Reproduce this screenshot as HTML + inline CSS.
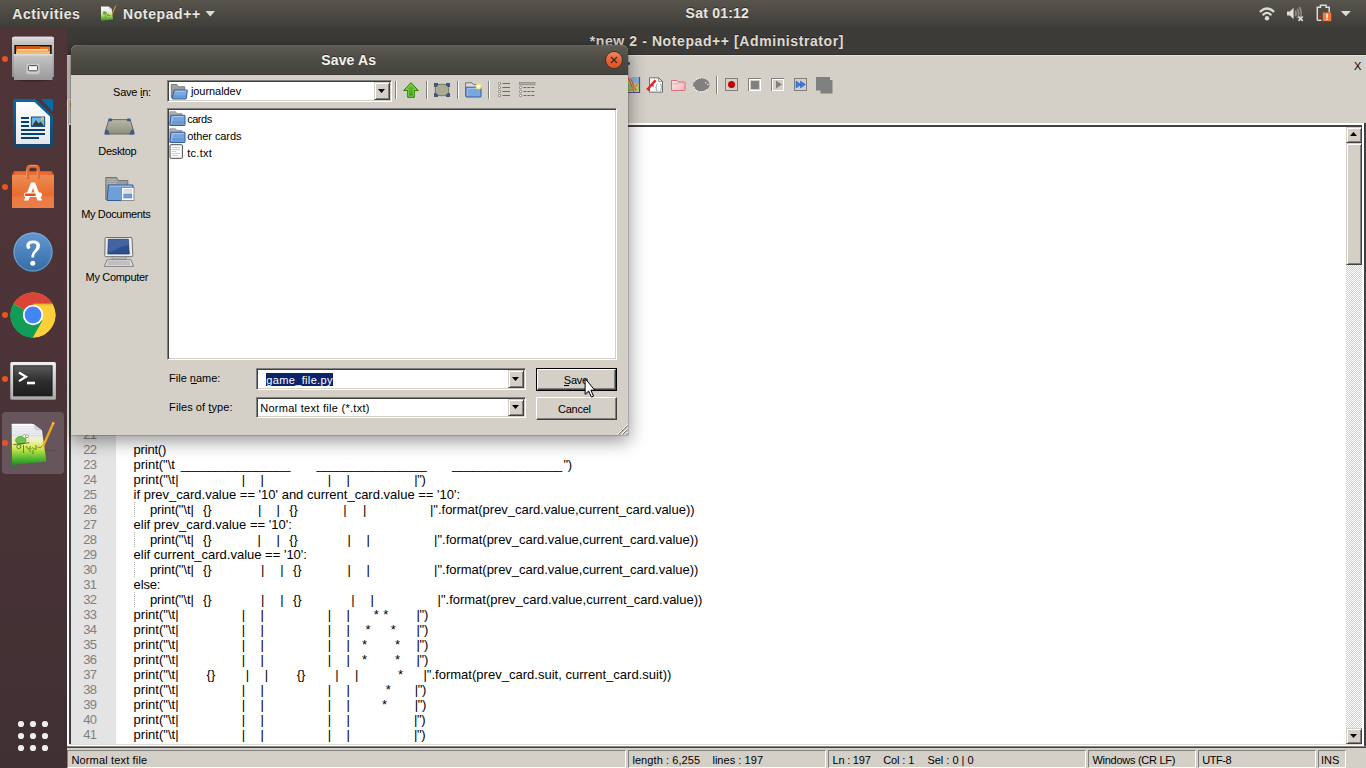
<!DOCTYPE html>
<html>
<head>
<meta charset="utf-8">
<title>Save As</title>
<style>
*{box-sizing:border-box;margin:0;padding:0}
html,body{width:1366px;height:768px;overflow:hidden;background:#d4d0c8;font-family:"Liberation Sans",sans-serif;}
div,span,svg{position:absolute}
.t{white-space:pre;line-height:normal}
#topbar{left:0;top:0;width:1366px;height:27px;background:linear-gradient(#58554d,#403e39);}
#dock{left:0;top:27px;width:67px;height:741px;background:linear-gradient(#4f3538,#4a3337 55%,#403033);}
#npptitle{left:67px;top:27px;width:1299px;height:28px;background:#3c3b37;border-bottom:1px solid #33322f}
.dot{width:6px;height:6px;border-radius:3px;background:#e95420;left:2px}
.sunk{border:1px solid;border-color:#808080 #fff #fff #808080}
.sunk2{border:1px solid;border-color:#808080 #fff #fff #808080;box-shadow:inset 1px 1px 0 #404040,inset -1px -1px 0 #d4d0c8}
.btn{background:#d4d0c8;border:1px solid;border-color:#d4d0c8 #404040 #404040 #d4d0c8;box-shadow:inset 1px 1px 0 #fff,inset -1px -1px 0 #808080}
.pbtn{background:#d4d0c8;border:1px solid;border-color:#fff #404040 #404040 #fff;box-shadow:inset -1px -1px 0 #808080}
</style>
</head>
<body>
<!-- Notepad++ main window -->
<div id="npptitle"></div>
<!-- menu remnant -->
<div style="left:628px;top:62px;width:1.5px;height:3px;background:#2a4694;border-radius:1px"></div>
<!-- toolbar icons -->
<svg style="left:624px;top:76px" width="212" height="20" viewBox="624 76 212 20">
 <!-- map icon -->
 <rect x="624" y="77" width="15" height="15" fill="#d6d870"/>
 <rect x="632" y="77" width="7" height="6.500" fill="#86b8e6"/>
 <rect x="628" y="84" width="5" height="7" fill="#8fd07a"/>
 <rect x="634" y="85" width="4" height="5" fill="#a5d68a"/>
 <path d="M628.500 78 L634 92 M630.500 78 L636 91" stroke="#e8505a" stroke-width="1.100" fill="none"/>
 <path d="M638 84 L629.500 91" stroke="#f08a2a" stroke-width="1.300" fill="none"/>
 <path d="M639.500 77 V92.500 H624" stroke="#4a4f8c" stroke-width="1.200" fill="none"/>
 <!-- function list -->
 <path d="M649.500 77.800 h9.200 l3.800 3.600 v10.800 h-13z" fill="#fdfdfb" stroke="#6e6e6e" stroke-width="1"/>
 <path d="M658.700 77.800 v3.600 h3.800" fill="none" stroke="#6e6e6e" stroke-width=".8"/>
 <path d="M647.300 89.800 L655.200 80.600" stroke="#e0242c" stroke-width="2.400" fill="none"/>
 <path d="M646.800 88.200 l2.600 2.600 M651 84.400 l2.800 2 M654.200 80 l1.800 1.600" stroke="#e0242c" stroke-width="1.300" fill="none"/>
 <path d="M657.600 84.300 q-1.200 0 -1.200 1.200 v1.200 q0 .9 -.9 .9 q.9 0 .9 .9 v1.200 q0 1.200 1.200 1.200 M660 84.300 q1.200 0 1.200 1.200 v1.200 q0 .9 .9 .9 q-.9 0 -.9 .9 v1.200 q0 1.200 -1.200 1.200" stroke="#7f9a9e" stroke-width=".9" fill="none"/>
 <!-- folder pink -->
 <defs><linearGradient id="pk" x1="0" y1="0" x2="1" y2="1"><stop offset="0" stop-color="#fdeeee"/><stop offset="1" stop-color="#f0b2b6"/></linearGradient></defs>
 <path d="M671.500 80.500 h5.500 l1 1.500 h6.500 q.5 0 .5 .5 v7.500 q0 .5 -.5 .5 h-12.500 q-.5 0 -.5 -.5z" fill="url(#pk)" stroke="#dd7078" stroke-width="1"/>
 <path d="M672 83.800 h6 l1 -1 h5.500" stroke="#e89aa0" stroke-width=".8" fill="none"/>
 <!-- monitor blob -->
 <ellipse cx="701.300" cy="84.800" rx="8.300" ry="6.600" fill="#808080"/>
 <path d="M694.500 81.500 q2 -3.200 6 -3.600 M693.800 87 q1.200 3.500 4.500 4.600 M700 91.800 q4 .3 7.500 -2.500" stroke="#ffffff" stroke-width="1.200" fill="none" stroke-dasharray="1.200 1"/>
 <circle cx="705.800" cy="82.800" r=".7" fill="#f4f2ee"/><circle cx="707.800" cy="84.500" r=".7" fill="#f4f2ee"/>
 <!-- separator -->
 <rect x="716" y="76" width="1" height="18" fill="#808080"/><rect x="717" y="76" width="1" height="18" fill="#fff"/>
 <!-- record -->
 <rect x="725.500" y="78.500" width="12" height="12" fill="#d4d0c8" stroke="#808080"/><circle cx="731.500" cy="84.500" r="3.500" fill="#cc0000"/>
 <!-- stop -->
 <rect x="748.500" y="78.500" width="12" height="12" fill="#d4d0c8" stroke="#808080"/><rect x="749.5" y="79.5" width="11" height="11" fill="none" stroke="#fff"/><rect x="751" y="81" width="8" height="8" fill="#808080"/>
 <!-- play -->
 <rect x="771.500" y="78.500" width="12" height="12" fill="#d4d0c8" stroke="#808080"/><rect x="772.5" y="79.5" width="11" height="11" fill="none" stroke="#fff"/><path d="M776 80.500 l6 4 l-6 4z" fill="#808080"/>
 <!-- ff -->
 <rect x="794.500" y="78.500" width="12" height="12" fill="#d4d0c8" stroke="#808080"/><path d="M796 81 l5 3.500 l-5 3.500z M800.500 81 l5 3.500 l-5 3.500z" fill="#3a7bea" stroke="#1e55c0" stroke-width=".5"/>
 <!-- save macro -->
 <path d="M816 77 h14 v3 h2.500 v13.500 h-12 v-3 h-4.500z" fill="#808080"/>
</svg>
<div style="left:67px;top:55px;width:1299px;height:1px;background:#e4e1da"></div>

<!-- editor frame -->
<div style="left:67px;top:100px;width:1px;height:648px;background:#fff"></div><div style="left:68px;top:125px;width:1px;height:623px;background:#fff"></div><div style="left:68px;top:99px;width:3px;height:1px;background:#f4f2ee"></div><div style="left:70px;top:103px;width:1px;height:4px;background:#e8a33d"></div>
<div style="left:69px;top:123px;width:1297px;height:2px;background:#fff"></div>
<div style="left:69px;top:125px;width:1297px;height:623px;background:#404040"></div>
<div style="left:71px;top:127px;width:1293px;height:620px;background:#fff"></div>
<div style="left:69px;top:744px;width:1293px;height:1px;background:#e0dcd4"></div><div style="left:67px;top:745px;width:1297px;height:1px;background:#fff"></div><div style="left:67px;top:746px;width:1299px;height:1px;background:#8a8a8a"></div><div style="left:67px;top:747px;width:1299px;height:1px;background:#404040"></div>
<div style="left:1362px;top:125px;width:2px;height:2px;background:#fff"></div><div style="left:1364px;top:123px;width:2px;height:2px;background:#404040"></div>
<div id="ed" style="left:71px;top:127px;width:1275px;height:617px;background:#fff;overflow:hidden">
 <div style="left:0;top:0;width:45px;height:617px;background:#e4e4e4"></div>
</div>
<!-- vertical scrollbar -->
<div style="left:1346px;top:127px;width:16px;height:617px;background:#e9e7e3;background-image:conic-gradient(#fff 25%,#d4d0c8 0 50%,#fff 0 75%,#d4d0c8 0);background-size:2px 2px"></div>
<div class="btn" style="left:1346px;top:127px;width:16px;height:16px"></div>
<div class="btn" style="left:1346px;top:143px;width:16px;height:122px"></div>
<div class="btn" style="left:1346px;top:728px;width:16px;height:16px"></div>
<svg style="left:1346px;top:127px" width="16" height="16"><path d="M4 9 h7 l-3.500 -4z" fill="#000"/></svg>
<svg style="left:1346px;top:728px" width="16" height="16"><path d="M4 6 h7 l-3.500 4z" fill="#000"/></svg>

<!-- status bar -->
<div style="left:67px;top:748px;width:1299px;height:20px;background:#d4d0c8"></div>
<div class="sunk" style="left:67px;top:750px;width:559px;height:18px"></div>
<div class="sunk" style="left:628px;top:750px;width:198px;height:18px"></div>
<div class="sunk" style="left:828px;top:750px;width:258px;height:18px"></div>
<div class="sunk" style="left:1088px;top:750px;width:108px;height:18px"></div>
<div class="sunk" style="left:1198px;top:750px;width:118px;height:18px"></div>
<div class="sunk" style="left:1318px;top:750px;width:28px;height:18px"></div>

<!-- code text -->
<div style="left:134px;top:502px;width:1px;height:15px;background-image:linear-gradient(#b0b0b0 50%,transparent 0);background-size:1px 2px"></div><div style="left:134px;top:532px;width:1px;height:15px;background-image:linear-gradient(#b0b0b0 50%,transparent 0);background-size:1px 2px"></div><div style="left:134px;top:562px;width:1px;height:15px;background-image:linear-gradient(#b0b0b0 50%,transparent 0);background-size:1px 2px"></div><div style="left:134px;top:592px;width:1px;height:15px;background-image:linear-gradient(#b0b0b0 50%,transparent 0);background-size:1px 2px"></div>
<span class="t" style="left:83.20px;top:427.00px;font-size:13px;color:#808080;letter-spacing:-0.630px;">21</span>
<span class="t" style="left:83.20px;top:442.00px;font-size:13px;color:#808080;letter-spacing:-0.630px;">22</span>
<span class="t" style="left:83.20px;top:457.00px;font-size:13px;color:#808080;letter-spacing:-0.630px;">23</span>
<span class="t" style="left:83.20px;top:472.00px;font-size:13px;color:#808080;letter-spacing:-0.630px;">24</span>
<span class="t" style="left:83.20px;top:487.00px;font-size:13px;color:#808080;letter-spacing:-0.630px;">25</span>
<span class="t" style="left:83.20px;top:502.00px;font-size:13px;color:#808080;letter-spacing:-0.630px;">26</span>
<span class="t" style="left:83.20px;top:517.00px;font-size:13px;color:#808080;letter-spacing:-0.630px;">27</span>
<span class="t" style="left:83.20px;top:532.00px;font-size:13px;color:#808080;letter-spacing:-0.630px;">28</span>
<span class="t" style="left:83.20px;top:547.00px;font-size:13px;color:#808080;letter-spacing:-0.630px;">29</span>
<span class="t" style="left:83.20px;top:562.00px;font-size:13px;color:#808080;letter-spacing:-0.630px;">30</span>
<span class="t" style="left:83.20px;top:577.00px;font-size:13px;color:#808080;letter-spacing:-0.630px;">31</span>
<span class="t" style="left:83.20px;top:592.00px;font-size:13px;color:#808080;letter-spacing:-0.630px;">32</span>
<span class="t" style="left:83.20px;top:607.00px;font-size:13px;color:#808080;letter-spacing:-0.630px;">33</span>
<span class="t" style="left:83.20px;top:622.00px;font-size:13px;color:#808080;letter-spacing:-0.630px;">34</span>
<span class="t" style="left:83.20px;top:637.00px;font-size:13px;color:#808080;letter-spacing:-0.630px;">35</span>
<span class="t" style="left:83.20px;top:652.00px;font-size:13px;color:#808080;letter-spacing:-0.630px;">36</span>
<span class="t" style="left:83.20px;top:667.00px;font-size:13px;color:#808080;letter-spacing:-0.630px;">37</span>
<span class="t" style="left:83.20px;top:682.00px;font-size:13px;color:#808080;letter-spacing:-0.630px;">38</span>
<span class="t" style="left:83.20px;top:697.00px;font-size:13px;color:#808080;letter-spacing:-0.630px;">39</span>
<span class="t" style="left:83.20px;top:712.00px;font-size:13px;color:#808080;letter-spacing:-0.630px;">40</span>
<span class="t" style="left:83.20px;top:727.00px;font-size:13px;color:#808080;letter-spacing:-0.630px;">41</span>
<span class="t" style="left:133.60px;top:442.00px;font-size:13px;letter-spacing:-0.203px;">print()</span>
<span class="t" style="left:133.60px;top:457.00px;font-size:13px;letter-spacing:-0.018px;">print("\t</span>
<span class="t" style="left:180.70px;top:457.00px;font-size:13px;letter-spacing:-0.397px;">________________</span>
<span class="t" style="left:316.40px;top:457.00px;font-size:13px;letter-spacing:-0.363px;">________________</span>
<span class="t" style="left:452.00px;top:457.00px;font-size:13px;letter-spacing:-0.363px;">________________</span>
<span class="t" style="left:563.60px;top:457.00px;font-size:13px;letter-spacing:-0.515px;">")</span>
<span class="t" style="left:133.60px;top:472.00px;font-size:13px;letter-spacing:0.016px;">print("\t|</span>
<span class="t" style="left:241.70px;top:472.00px;font-size:13px;">|</span>
<span class="t" style="left:260.60px;top:472.00px;font-size:13px;">|</span>
<span class="t" style="left:327.80px;top:472.00px;font-size:13px;">|</span>
<span class="t" style="left:346.50px;top:472.00px;font-size:13px;">|</span>
<span class="t" style="left:133.60px;top:607.00px;font-size:13px;letter-spacing:0.016px;">print("\t|</span>
<span class="t" style="left:241.70px;top:607.00px;font-size:13px;">|</span>
<span class="t" style="left:260.60px;top:607.00px;font-size:13px;">|</span>
<span class="t" style="left:327.80px;top:607.00px;font-size:13px;">|</span>
<span class="t" style="left:346.50px;top:607.00px;font-size:13px;">|</span>
<span class="t" style="left:133.60px;top:622.00px;font-size:13px;letter-spacing:0.016px;">print("\t|</span>
<span class="t" style="left:241.70px;top:622.00px;font-size:13px;">|</span>
<span class="t" style="left:260.60px;top:622.00px;font-size:13px;">|</span>
<span class="t" style="left:327.80px;top:622.00px;font-size:13px;">|</span>
<span class="t" style="left:346.50px;top:622.00px;font-size:13px;">|</span>
<span class="t" style="left:133.60px;top:637.00px;font-size:13px;letter-spacing:0.016px;">print("\t|</span>
<span class="t" style="left:241.70px;top:637.00px;font-size:13px;">|</span>
<span class="t" style="left:260.60px;top:637.00px;font-size:13px;">|</span>
<span class="t" style="left:327.80px;top:637.00px;font-size:13px;">|</span>
<span class="t" style="left:346.50px;top:637.00px;font-size:13px;">|</span>
<span class="t" style="left:133.60px;top:652.00px;font-size:13px;letter-spacing:0.016px;">print("\t|</span>
<span class="t" style="left:241.70px;top:652.00px;font-size:13px;">|</span>
<span class="t" style="left:260.60px;top:652.00px;font-size:13px;">|</span>
<span class="t" style="left:327.80px;top:652.00px;font-size:13px;">|</span>
<span class="t" style="left:346.50px;top:652.00px;font-size:13px;">|</span>
<span class="t" style="left:133.60px;top:682.00px;font-size:13px;letter-spacing:0.016px;">print("\t|</span>
<span class="t" style="left:241.70px;top:682.00px;font-size:13px;">|</span>
<span class="t" style="left:260.60px;top:682.00px;font-size:13px;">|</span>
<span class="t" style="left:327.80px;top:682.00px;font-size:13px;">|</span>
<span class="t" style="left:346.50px;top:682.00px;font-size:13px;">|</span>
<span class="t" style="left:133.60px;top:697.00px;font-size:13px;letter-spacing:0.016px;">print("\t|</span>
<span class="t" style="left:241.70px;top:697.00px;font-size:13px;">|</span>
<span class="t" style="left:260.60px;top:697.00px;font-size:13px;">|</span>
<span class="t" style="left:327.80px;top:697.00px;font-size:13px;">|</span>
<span class="t" style="left:346.50px;top:697.00px;font-size:13px;">|</span>
<span class="t" style="left:133.60px;top:712.00px;font-size:13px;letter-spacing:0.016px;">print("\t|</span>
<span class="t" style="left:241.70px;top:712.00px;font-size:13px;">|</span>
<span class="t" style="left:260.60px;top:712.00px;font-size:13px;">|</span>
<span class="t" style="left:327.80px;top:712.00px;font-size:13px;">|</span>
<span class="t" style="left:346.50px;top:712.00px;font-size:13px;">|</span>
<span class="t" style="left:133.60px;top:727.00px;font-size:13px;letter-spacing:0.016px;">print("\t|</span>
<span class="t" style="left:241.70px;top:727.00px;font-size:13px;">|</span>
<span class="t" style="left:260.60px;top:727.00px;font-size:13px;">|</span>
<span class="t" style="left:327.80px;top:727.00px;font-size:13px;">|</span>
<span class="t" style="left:346.50px;top:727.00px;font-size:13px;">|</span>
<span class="t" style="left:414.30px;top:472.00px;font-size:13px;letter-spacing:-0.346px;">|")</span>
<span class="t" style="left:133.60px;top:487.00px;font-size:13px;">if prev_card.value == '10' and current_card.value == '10':</span>
<span class="t" style="left:149.90px;top:502.00px;font-size:13px;letter-spacing:-0.106px;">print("\t|</span>
<span class="t" style="left:202.90px;top:502.00px;font-size:13px;">{}</span>
<span class="t" style="left:149.90px;top:532.00px;font-size:13px;letter-spacing:-0.106px;">print("\t|</span>
<span class="t" style="left:202.90px;top:532.00px;font-size:13px;">{}</span>
<span class="t" style="left:149.90px;top:562.00px;font-size:13px;letter-spacing:-0.106px;">print("\t|</span>
<span class="t" style="left:202.90px;top:562.00px;font-size:13px;">{}</span>
<span class="t" style="left:149.90px;top:592.00px;font-size:13px;letter-spacing:-0.106px;">print("\t|</span>
<span class="t" style="left:202.90px;top:592.00px;font-size:13px;">{}</span>
<span class="t" style="left:258.10px;top:502.00px;font-size:13px;">|</span>
<span class="t" style="left:276.50px;top:502.00px;font-size:13px;">|</span>
<span class="t" style="left:343.20px;top:502.00px;font-size:13px;">|</span>
<span class="t" style="left:363.10px;top:502.00px;font-size:13px;">|</span>
<span class="t" style="left:289.20px;top:502.00px;font-size:13px;">{}</span>
<span class="t" style="left:430.00px;top:502.00px;font-size:13px;letter-spacing:-0.015px;">|".format(prev_card.value,current_card.value))</span>
<span class="t" style="left:133.60px;top:517.00px;font-size:13px;">elif prev_card.value == '10':</span>
<span class="t" style="left:257.40px;top:532.00px;font-size:13px;">|</span>
<span class="t" style="left:276.50px;top:532.00px;font-size:13px;">|</span>
<span class="t" style="left:347.50px;top:532.00px;font-size:13px;">|</span>
<span class="t" style="left:366.40px;top:532.00px;font-size:13px;">|</span>
<span class="t" style="left:289.20px;top:532.00px;font-size:13px;">{}</span>
<span class="t" style="left:434.10px;top:532.00px;font-size:13px;letter-spacing:-0.022px;">|".format(prev_card.value,current_card.value))</span>
<span class="t" style="left:133.60px;top:547.00px;font-size:13px;">elif current_card.value == '10':</span>
<span class="t" style="left:261.10px;top:562.00px;font-size:13px;">|</span>
<span class="t" style="left:280.30px;top:562.00px;font-size:13px;">|</span>
<span class="t" style="left:347.50px;top:562.00px;font-size:13px;">|</span>
<span class="t" style="left:366.40px;top:562.00px;font-size:13px;">|</span>
<span class="t" style="left:293.00px;top:562.00px;font-size:13px;">{}</span>
<span class="t" style="left:434.10px;top:562.00px;font-size:13px;letter-spacing:-0.022px;">|".format(prev_card.value,current_card.value))</span>
<span class="t" style="left:133.60px;top:577.00px;font-size:13px;letter-spacing:-0.162px;">else:</span>
<span class="t" style="left:261.10px;top:592.00px;font-size:13px;">|</span>
<span class="t" style="left:280.30px;top:592.00px;font-size:13px;">|</span>
<span class="t" style="left:351.20px;top:592.00px;font-size:13px;">|</span>
<span class="t" style="left:370.60px;top:592.00px;font-size:13px;">|</span>
<span class="t" style="left:293.00px;top:592.00px;font-size:13px;">{}</span>
<span class="t" style="left:437.60px;top:592.00px;font-size:13px;letter-spacing:-0.011px;">|".format(prev_card.value,current_card.value))</span>
<span class="t" style="left:373.80px;top:607.00px;font-size:13px;">*</span>
<span class="t" style="left:383.30px;top:607.00px;font-size:13px;">*</span>
<span class="t" style="left:416.40px;top:607.00px;font-size:13px;letter-spacing:-0.246px;">|")</span>
<span class="t" style="left:365.60px;top:622.00px;font-size:13px;">*</span>
<span class="t" style="left:390.80px;top:622.00px;font-size:13px;">*</span>
<span class="t" style="left:416.40px;top:622.00px;font-size:13px;letter-spacing:-0.246px;">|")</span>
<span class="t" style="left:361.90px;top:637.00px;font-size:13px;">*</span>
<span class="t" style="left:395.00px;top:637.00px;font-size:13px;">*</span>
<span class="t" style="left:416.40px;top:637.00px;font-size:13px;letter-spacing:-0.246px;">|")</span>
<span class="t" style="left:361.90px;top:652.00px;font-size:13px;">*</span>
<span class="t" style="left:395.00px;top:652.00px;font-size:13px;">*</span>
<span class="t" style="left:416.40px;top:652.00px;font-size:13px;letter-spacing:-0.246px;">|")</span>
<span class="t" style="left:133.60px;top:667.00px;font-size:13px;letter-spacing:0.016px;">print("\t|</span>
<span class="t" style="left:206.60px;top:667.00px;font-size:13px;">{}</span>
<span class="t" style="left:245.70px;top:667.00px;font-size:13px;">|</span>
<span class="t" style="left:264.80px;top:667.00px;font-size:13px;">|</span>
<span class="t" style="left:335.30px;top:667.00px;font-size:13px;">|</span>
<span class="t" style="left:354.90px;top:667.00px;font-size:13px;">|</span>
<span class="t" style="left:296.70px;top:667.00px;font-size:13px;">{}</span>
<span class="t" style="left:398.00px;top:667.00px;font-size:13px;">*</span>
<span class="t" style="left:423.40px;top:667.00px;font-size:13px;letter-spacing:0.018px;">|".format(prev_card.suit, current_card.suit))</span>
<span class="t" style="left:385.80px;top:682.00px;font-size:13px;">*</span>
<span class="t" style="left:414.70px;top:682.00px;font-size:13px;letter-spacing:-0.346px;">|")</span>
<span class="t" style="left:382.10px;top:697.00px;font-size:13px;">*</span>
<span class="t" style="left:414.70px;top:697.00px;font-size:13px;letter-spacing:-0.346px;">|")</span>
<span class="t" style="left:413.90px;top:712.00px;font-size:13px;letter-spacing:-0.346px;">|")</span>
<span class="t" style="left:413.90px;top:727.00px;font-size:13px;letter-spacing:-0.346px;">|")</span>
<span class="t" style="left:1353.90px;top:60.00px;font-size:11px;">X</span>
<span class="t" style="left:71.40px;top:754.00px;font-size:11px;letter-spacing:0.158px;">Normal text file</span>
<span class="t" style="left:632.40px;top:754.00px;font-size:11px;letter-spacing:0.081px;">length : 6,255</span>
<span class="t" style="left:712.40px;top:754.00px;font-size:11px;letter-spacing:0.047px;">lines : 197</span>
<span class="t" style="left:832.50px;top:754.00px;font-size:11px;letter-spacing:-0.206px;">Ln : 197</span>
<span class="t" style="left:883.20px;top:754.00px;font-size:11px;letter-spacing:-0.112px;">Col : 1</span>
<span class="t" style="left:927.40px;top:754.00px;font-size:11px;letter-spacing:-0.005px;">Sel : 0 | 0</span>
<span class="t" style="left:1092.50px;top:754.00px;font-size:11px;letter-spacing:-0.280px;">Windows (CR LF)</span>
<span class="t" style="left:1202.20px;top:754.00px;font-size:11px;letter-spacing:-0.461px;">UTF-8</span>
<span class="t" style="left:1321.00px;top:754.00px;font-size:11px;">INS</span>
<span class="t" style="left:589.80px;top:33.00px;font-size:14px;font-weight:bold;color:#dfdbd2;letter-spacing:0.591px;text-shadow:0 -1px 0 rgba(0,0,0,.45);">*new 2 - Notepad++ [Administrator]</span>
<!-- Save As dialog -->
<div id="dlg" style="left:71px;top:45px;width:557px;height:390px;background:#d4d0c8;border-radius:6px 6px 0 0;box-shadow:0 5px 18px 1px rgba(0,0,0,.42),0 0 0 1px rgba(40,40,36,.18)">
 <div style="left:0;top:0;width:557px;height:30px;background:linear-gradient(#5d5b51,#4d4b44 50%,#44433e);border-radius:6px 6px 0 0;border-top:1px solid #68665b;border-bottom:1px solid #3a3935"></div>
 <!-- close button -->
 <div style="left:534px;top:6px;width:18px;height:18px;border-radius:9px;background:#37362f"></div>
 <div style="left:535px;top:7px;width:16px;height:16px;border-radius:8px;background:linear-gradient(#f08763,#e9602e 55%,#e2541f)"></div>
 <svg style="left:535px;top:7px" width="16" height="16"><path d="M5 5 L11 11 M11 5 L5 11" stroke="#3d2a1c" stroke-width="1.300" fill="none"/></svg>

 <!-- Save in combo: abs (167,80)-(391,101) => rel (96,35) -->
 <div class="sunk2" style="left:96px;top:35px;width:225px;height:22px;background:#fff"></div>
 <div class="btn" style="left:303px;top:37px;width:16px;height:18px"></div>
 <svg style="left:303px;top:37px" width="16" height="18"><path d="M4 7 h7 l-3.500 4z" fill="#000"/></svg>
 <!-- folder icon in combo -->
 <svg style="left:99px;top:39px" width="18" height="16" viewBox="0 0 18 16"><defs><linearGradient id="gb" x1="0" y1="0" x2="0" y2="1"><stop offset="0" stop-color="#a6a6a6"/><stop offset="1" stop-color="#8a8a8a"/></linearGradient></defs><path d="M1.300 .5 h5.600 l1.500 2.200 h6.300 v10.800 h-13.400z" fill="url(#gb)" stroke="#6a6a6a" stroke-width=".8"/><path d="M4.600 6 h12.200 q.6 0 .5 .6 l-1 7.800 q-.1 .6 -.7 .6 h-12.800 q-.7 0 -.5 -.7 l1.700 -7.700 q.1 -.6 .6 -.6z" fill="#7aa7de" stroke="#2f5c9c" stroke-width="1"/><path d="M5.200 7.200 h10.900" stroke="#b9d3f2" stroke-width=".9"/><path d="M3.600 11.500 l-.5 2.500 h12.500 l.3 -2.500z" fill="#5f8fd0" opacity=".6"/></svg>

 <!-- dialog toolbar separators -->
 <div style="left:324px;top:36px;width:1px;height:18px;background:#808080"></div><div style="left:325px;top:36px;width:1px;height:18px;background:#fff"></div>
 <div style="left:355px;top:36px;width:1px;height:18px;background:#808080"></div><div style="left:356px;top:36px;width:1px;height:18px;background:#fff"></div>
 <div style="left:386px;top:36px;width:1px;height:18px;background:#808080"></div><div style="left:387px;top:36px;width:1px;height:18px;background:#fff"></div>
 <div style="left:417px;top:36px;width:1px;height:18px;background:#808080"></div><div style="left:418px;top:36px;width:1px;height:18px;background:#fff"></div>
 <!-- up arrow (abs 403..419, 82..98) -->
 <svg style="left:332px;top:37px" width="16" height="16"><defs><linearGradient id="ua" x1="0" y1="0" x2="0" y2="1"><stop offset="0" stop-color="#6cc832"/><stop offset="1" stop-color="#3f9a12"/></linearGradient></defs><path d="M8 .7 L15.300 8.500 H11.300 V15.300 H4.700 V8.500 H.7z" fill="url(#ua)" stroke="#2f7d0c" stroke-width="1" stroke-linejoin="round"/><path d="M8 2.300 L12.900 7.500 H10.300 V14.300 H5.700 V7.500 H3.100z" fill="none" stroke="#9be46a" stroke-width=".8" opacity=".8"/></svg>
 <!-- desktop small (abs 434..450, 83..97) -->
 <svg style="left:363px;top:38px" width="16" height="14"><path d="M0 0 h4 v1.500 h8 v-1.500 h4 v4 h-1.500 v6 h1.500 v4 h-4 v-1.500 h-8 v1.500 h-4 v-4 h1.500 v-6 h-1.500z" fill="#3b5787"/><path d="M5 1.300 h6 l3.700 3.200 v5 l-3.700 3.200 h-6 l-3.700 -3.200 v-5z" fill="#a9ab94" stroke="#6c6e58" stroke-width=".8" stroke-linejoin="round"/></svg>
 <!-- new folder (abs 465..481, 82..97) -->
 <svg style="left:394px;top:37px" width="17" height="16"><path d="M.6 .8 h6.400 l1.500 1.800 h5 v11.600 h-12.900z" fill="#dcdcdc" stroke="#6a6a6a" stroke-width=".9"/><path d="M1.600 5.200 h13.900 q.5 0 .5 .5 v8.800 q0 .5 -.5 .5 h-13.900 q-.5 0 -.5 -.5 v-8.800 q0 -.5 .5 -.5z" fill="#7aa7de" stroke="#2f5c9c" stroke-width="1"/><path d="M2.200 14 v-7.600 h12.600" stroke="#b4cff0" stroke-width=".8" fill="none"/><circle cx="13.600" cy="4.400" r="2.900" fill="#fff27a" opacity=".85"/><circle cx="13.600" cy="4.400" r="1.500" fill="#fffef0"/></svg>
 <!-- list icon (abs 498..510, 82.5..97) -->
 <svg style="left:427px;top:37px" width="14" height="16"><g fill="#fff" stroke="#5c5c5c" stroke-width=".7"><circle cx="1.500" cy="1.500" r="1.150"/><circle cx="1.500" cy="5.500" r="1.150"/><circle cx="1.500" cy="9.500" r="1.150"/><circle cx="1.500" cy="13.500" r="1.150"/></g><path d="M4.500 1.500 h7.500 M4.500 5.500 h7.500 M4.500 9.500 h7.500 M4.500 13.500 h7.500" stroke="#6a6a6a" stroke-width="1"/></svg>
 <!-- details icon (abs 519..535) -->
 <svg style="left:448px;top:37px" width="17" height="16"><rect x=".5" y=".5" width="15.500" height="2.300" fill="#a9b0a6" stroke="#7c7c7c" stroke-width=".6"/><g fill="#fff" stroke="#5c5c5c" stroke-width=".7"><circle cx="1.500" cy="5.500" r="1.150"/><circle cx="1.500" cy="9.500" r="1.150"/><circle cx="1.500" cy="13.500" r="1.150"/></g><path d="M4.500 5.500 h11 M4.500 9.500 h11 M4.500 13.500 h11" stroke="#6a6a6a" stroke-width="1" stroke-dasharray="3 .9"/></svg>

 <!-- file list: abs (167,107)-(617,359) => rel (96,62) 450x252 -->
 <div class="sunk2" style="left:96px;top:63px;width:450px;height:252px;background:#fff"></div>
 <!-- folder icons -->
 <svg style="left:98px;top:66px" width="17" height="15" viewBox="0 0 17 15"><path d="M.8 .8 h5.700 l1.500 1.800 h4.800 v11.600 h-12z" fill="#b5b5b5" stroke="#8a8a8a" stroke-width=".8"/><path d="M2.300 4.200 h13.200 q.5 0 .5 .5 v9.300 q0 .5 -.5 .5 h-14.200 q-.5 0 -.4 -.5 l1 -9.300 q0 -.5 .5 -.5z" fill="#78a5dc" stroke="#2f5c9c" stroke-width="1"/><path d="M2.600 13 l.7 -7.400 h11.400" stroke="#b4cff0" stroke-width=".9" fill="none"/><path d="M2.800 10 h11.700 v3.300 h-11.700z" fill="#5f8fd0" opacity=".55"/></svg>
 <svg style="left:98px;top:83px" width="17" height="15" viewBox="0 0 17 15"><path d="M.8 .8 h5.700 l1.500 1.800 h4.800 v11.600 h-12z" fill="#b5b5b5" stroke="#8a8a8a" stroke-width=".8"/><path d="M2.300 4.200 h13.200 q.5 0 .5 .5 v9.300 q0 .5 -.5 .5 h-14.200 q-.5 0 -.4 -.5 l1 -9.300 q0 -.5 .5 -.5z" fill="#78a5dc" stroke="#2f5c9c" stroke-width="1"/><path d="M2.600 13 l.7 -7.400 h11.400" stroke="#b4cff0" stroke-width=".9" fill="none"/><path d="M2.800 10 h11.700 v3.300 h-11.700z" fill="#5f8fd0" opacity=".55"/></svg>
 <!-- text file icon -->
 <svg style="left:98px;top:99px" width="14" height="15"><rect x="1" y=".7" width="12.400" height="13.600" rx="1" fill="#fcfcfc" stroke="#4e4e4e" stroke-width="1"/><path d="M3 3.500 h8 M3 5.500 h8 M3 7.500 h4 M3 9.500 h8 M3 11.500 h6" stroke="#c8c8c8" stroke-width=".9"/></svg>

 <!-- places icons -->
 <!-- Desktop abs (104..134, 118.7..134.7) -->
 <svg style="left:33px;top:73px" width="31" height="17" viewBox="0 0 31 17"><defs><linearGradient id="dk" x1="0" y1="0" x2="0" y2="1"><stop offset="0" stop-color="#b6b8a5"/><stop offset="1" stop-color="#8e907d"/></linearGradient></defs><path d="M5.800 1.600 h19.400 q1 0 1.300 1 l3.500 12 q.3 1.400 -1.100 1.400 h-26.800 q-1.400 0 -1.100 -1.400 l3.500 -12 q.3 -1 1.300 -1z" fill="url(#dk)" stroke="#5f6152" stroke-width=".9"/><rect x="4.300" y=".6" width="3.800" height="2.600" rx=".9" fill="#3d5a8e"/><rect x="22.900" y=".6" width="3.800" height="2.600" rx=".9" fill="#3d5a8e"/><path d="M.3 16.500 l1.500 -5.200 q3 .3 3.800 5.200z" fill="#3d5a8e"/><path d="M30.700 16.500 l-1.500 -5.200 q-3 .3 -3.800 5.200z" fill="#3d5a8e"/></svg>
 <!-- My Documents abs (105..134, 177..201.5) -->
 <svg style="left:34px;top:131px" width="30" height="26" viewBox="0 0 30 26"><path d="M.8 1.500 h11 l1.500 3 h9.500 v19 h-22z" fill="#9b9b9b" stroke="#6e6e6e" stroke-width=".9"/><path d="M1.500 3.500 h10 M1.500 5.500 h10 M1.500 7.500 h10" stroke="#b8b8b8" stroke-width=".8"/><path d="M3.500 9 h24.500 l-1 15.500 h-25z" fill="#6f9fd8" stroke="#2f5c9c" stroke-width="1"/><path d="M4.500 10.200 h22.500" stroke="#a9c8ee" stroke-width="1"/><rect x="16.500" y="11.500" width="12.500" height="13" fill="#fafafa" stroke="#8c8c8c" stroke-width=".9"/><path d="M18.500 14 h8.500 M18.500 16 h8.500" stroke="#bcbcbc" stroke-width=".9"/><rect x="18.800" y="18" width="8" height="4" fill="#6f9fd8" stroke="#5b7fb5" stroke-width=".6"/></svg>
 <!-- My Computer abs (104..134, 237..268) -->
 <svg style="left:33px;top:191px" width="32" height="33" viewBox="0 0 32 33"><path d="M2 1.500 h25 q1 0 1 1 l.8 17 q0 1.200 -1 1.200 h-26 q-1 0 -1 -1.200 l.300 -17 q0 -1 1 -1z" fill="#ededed" stroke="#6f6f6f" stroke-width="1"/><path d="M4.300 3.300 h20 l1 14.700 h-21.500z" fill="#2b4f8f" stroke="#1d3566" stroke-width=".7"/><path d="M4.500 3.500 h19.600 l.4 5.500 q-8 1 -12 4 q-4 3 -8.300 3.500z" fill="#6c8cc4" opacity=".38"/><rect x="8" y="20.800" width="14" height="2.300" fill="#bdbdbd" stroke="#7a7a7a" stroke-width=".6"/><path d="M3 23.800 h24 l2.500 6.500 h-29z" fill="#ececec" stroke="#6f6f6f" stroke-width=".9"/><path d="M3.500 26 h22.500 M3 28 h23.500" stroke="#b0b0b0" stroke-width="1.500"/></svg>

 <!-- File name combo abs (256,368)-(525,389) rel (185,323) -->
 <div class="sunk2" style="left:185px;top:323px;width:270px;height:22px;background:#fff"></div>
 <div class="btn" style="left:437px;top:325px;width:16px;height:18px"></div>
 <svg style="left:437px;top:325px" width="16" height="18"><path d="M4 7 h7 l-3.500 4z" fill="#000"/></svg>
 <div style="left:195px;top:328px;width:67px;height:13px;background:#0a246a"></div>
 <!-- type combo abs (256,397)-(525,418) rel (185,352) -->
 <div class="sunk2" style="left:185px;top:352px;width:270px;height:21px;background:#fff"></div>
 <div class="btn" style="left:437px;top:354px;width:16px;height:17px"></div>
 <svg style="left:437px;top:354px" width="16" height="17"><path d="M4 6 h7 l-3.500 4z" fill="#000"/></svg>

 <!-- Save button abs (536,368)-(617,391) rel (465,323) -->
 <div style="left:465px;top:323px;width:81px;height:23px;background:#000"></div>
 <div class="pbtn" style="left:466px;top:324px;width:79px;height:21px"></div>
 <!-- Cancel abs (536,397)-(617,420) -->
 <div class="pbtn" style="left:465px;top:352px;width:81px;height:23px"></div>

 <!-- resize grip -->
 <svg style="left:546px;top:379px" width="11" height="11"><path d="M10.500 1.500 L1.500 10.500 M10.500 5.500 L5.500 10.500 M10.500 9 L9 10.500" stroke="#808080" stroke-width="1.200"/><path d="M10.500 .5 L.5 10.500 M10.500 4.500 L4.500 10.500 M10.500 8 L8 10.500" stroke="#fff" stroke-width="1"/></svg>
 <div style="left:70px;top:52px;width:2px;height:1px;background:#000"></div>
 <div style="left:120px;top:338px;width:6px;height:1px;background:#000"></div>
 <div style="left:138px;top:367px;width:3px;height:1px;background:#000"></div>
 <div style="left:493px;top:340px;width:5px;height:1px;background:#000"></div>
</div>

<span class="t" style="left:321.20px;top:52.00px;font-size:14px;font-weight:bold;color:#f4f3ef;letter-spacing:0.167px;text-shadow:0 -1px 0 rgba(0,0,0,.45);">Save As</span>
<span class="t" style="left:113.10px;top:86.00px;font-size:11px;letter-spacing:-0.241px;">Save in:</span>
<span class="t" style="left:190.90px;top:85.00px;font-size:11px;letter-spacing:-0.051px;">journaldev</span>
<span class="t" style="left:187.20px;top:113.00px;font-size:11px;letter-spacing:-0.475px;">cards</span>
<span class="t" style="left:187.20px;top:130.00px;font-size:11px;letter-spacing:-0.073px;">other cards</span>
<span class="t" style="left:187.20px;top:147.00px;font-size:11px;letter-spacing:0.286px;">tc.txt</span>
<span class="t" style="left:98.30px;top:145.00px;font-size:11px;letter-spacing:-0.323px;">Desktop</span>
<span class="t" style="left:81.20px;top:208.00px;font-size:11px;letter-spacing:-0.350px;">My Documents</span>
<span class="t" style="left:85.60px;top:271.00px;font-size:11px;letter-spacing:-0.325px;">My Computer</span>
<span class="t" style="left:169.10px;top:372.00px;font-size:11px;letter-spacing:-0.011px;">File name:</span>
<span class="t" style="left:266.30px;top:374.00px;font-size:11px;color:#fff;letter-spacing:0.348px;">game_file.py</span>
<span class="t" style="left:169.10px;top:401.00px;font-size:11px;letter-spacing:0.077px;">Files of type:</span>
<span class="t" style="left:260.20px;top:402.00px;font-size:11px;letter-spacing:0.286px;">Normal text file (*.txt)</span>
<span class="t" style="left:563.80px;top:374.00px;font-size:11px;letter-spacing:-0.252px;">Save</span>
<span class="t" style="left:558.00px;top:403.00px;font-size:11px;letter-spacing:-0.259px;">Cancel</span>
<!-- top bar -->
<div id="topbar"></div>
<!-- notepad++ tiny icon in topbar (100.5..115, 6..20.7) -->
<svg style="left:100px;top:5px" width="17" height="17" viewBox="0 0 17 17"><defs><linearGradient id="g1" x1="0" y1="0" x2="0" y2="1"><stop offset="0" stop-color="#fbfbfb"/><stop offset=".38" stop-color="#e4e8e4"/><stop offset=".55" stop-color="#cfe56e"/><stop offset="1" stop-color="#239623"/></linearGradient></defs><path d="M1 1.500 h7.500 l3.200 2.600 l1.300 10.400 l-12 1.300z" fill="url(#g1)"/><path d="M8.500 1.500 l3.200 2.600 l-3 -.2z" fill="#cdd1d6"/><path d="M15.800 .6 L12 9.300" stroke="#e8a020" stroke-width="1"/><ellipse cx="4.800" cy="7.600" rx="2.100" ry="1.400" fill="#5aa83f"/><circle cx="6.300" cy="6.300" r=".8" fill="#f4f8ee"/><path d="M3 9.200 h6 M5.500 10 v2.500 M7 10.500 h3.500" stroke="#4a7a22" stroke-width=".6"/></svg>
<!-- app menu arrow -->
<svg style="left:205px;top:10px" width="11" height="8"><path d="M.5 1 h9.500 l-4.750 5.500z" fill="#dcdcd6"/></svg>
<!-- wifi -->
<svg style="left:1259px;top:6px" width="16" height="16" viewBox="0 0 16 16"><g fill="none" stroke="#dddcd6" stroke-linecap="round"><path d="M1.600 5.300 Q8 -.3 14.400 5.300" stroke-width="2.300"/><path d="M4.300 8.600 Q8 5.300 11.700 8.600" stroke-width="2.200"/></g><circle cx="8" cy="12.300" r="2.200" fill="#dddcd6"/></svg>
<!-- volume muted -->
<svg style="left:1286px;top:5px" width="19" height="18" viewBox="0 0 19 18"><path d="M1 6.500 h2.800 l3.800 -3.800 v11.600 l-3.800 -3.800 h-2.800z" fill="#dddcd6"/><g fill="none" stroke="#8d8b84" stroke-width="1.700"><path d="M9.300 5.800 Q11 8.500 9.300 11.200"/><path d="M11.300 3.800 Q14.300 8.500 11.300 13.200"/><path d="M13.300 2 Q17.300 8.500 13.300 15"/></g><path d="M12.500 11.500 l4.300 4.300 M16.800 11.500 l-4.300 4.300" stroke="#dddcd6" stroke-width="1.700"/></svg>
<!-- battery -->
<svg style="left:1316px;top:4px" width="16" height="18" viewBox="0 0 16 18"><path d="M1.300 16.300 V3.300 h3.200 V1.300 h5.500 v2 h3.200 v5" fill="none" stroke="#dddcd6" stroke-width="1.500"/><path d="M1.300 16.300 h4.200" stroke="#dddcd6" stroke-width="1.500"/><rect x="3.300" y="11.600" width="2.200" height="2.200" fill="#e01b24"/><rect x="6.800" y="8.500" width="8.400" height="8.600" fill="#f5793a"/><rect x="10.200" y="9.800" width="1.700" height="4" fill="#fff"/><rect x="10.200" y="14.600" width="1.700" height="1.400" fill="#fff"/></svg>
<!-- sys arrow -->
<svg style="left:1340px;top:10px" width="12" height="8"><path d="M.8 1 h10 l-5 5.200z" fill="#dcdcd6"/></svg>

<!-- dock -->
<div id="dock"></div>
<div style="left:2px;top:412px;width:62px;height:62px;border-radius:4px;background:#66555b"></div>
<div class="dot" style="top:56px"></div>
<div class="dot" style="top:184px"></div>
<div class="dot" style="top:312px"></div>
<div class="dot" style="top:376px"></div>
<div class="dot" style="top:440px"></div>

<!-- Files icon (12..54, 36.6..80) -->
<svg style="left:11px;top:35px" width="44" height="47" viewBox="0 0 44 47">
 <defs><linearGradient id="fa" x1="0" y1="0" x2="0" y2="1"><stop offset="0" stop-color="#cfcfcf"/><stop offset="1" stop-color="#8e8e8e"/></linearGradient>
 <linearGradient id="fb" x1="0" y1="0" x2="0" y2="1"><stop offset="0" stop-color="#c6c6c6"/><stop offset="1" stop-color="#9a9a9a"/></linearGradient>
 <linearGradient id="fc" x1="0" y1="0" x2="0" y2="1"><stop offset="0" stop-color="#e6e6e6"/><stop offset=".35" stop-color="#d2d2d2"/><stop offset="1" stop-color="#bdbdbd"/></linearGradient></defs>
 <ellipse cx="22" cy="44.500" rx="19" ry="2" fill="#2a1c20" opacity=".55"/>
 <path d="M3 1.700 h38 q2 0 2 2 v38.300 h-42 v-38.300 q0 -2 2 -2z" fill="url(#fa)"/>
 <path d="M3 1.700 h38 q2 0 2 2 v6.300 h-42 v-6.300 q0 -2 2 -2z" fill="url(#fc)"/>
 <rect x="3.300" y="10" width="37.400" height="9.500" fill="#191715"/>
 <rect x="5" y="11.500" width="34" height="8" fill="#e67a22"/>
 <rect x="5" y="11.200" width="24" height="2.800" fill="#cf5a12"/>
 <rect x="6" y="14.300" width="31" height="1.200" fill="#fff6ea"/>
 <rect x="5" y="16.200" width="34" height="3.500" fill="#f3bd6e"/>
 <path d="M3 19.300 h38.500 v25.700 h-38.500z" fill="url(#fb)"/>
 <path d="M3 19.300 h38.500 v1.300 h-38.500z" fill="#e2e2e2"/>
 <rect x="15" y="28.200" width="14" height="11" rx="2.200" fill="#cdcdcd" stroke="#adadad" stroke-width=".6"/>
 <rect x="17.400" y="30.600" width="9.200" height="5.200" rx="1" fill="#f6f6f6" stroke="#474747" stroke-width="1"/>
</svg>
<!-- LibreOffice Writer (13..53, 99..147) -->
<svg style="left:12px;top:98px" width="42" height="50" viewBox="0 0 42 50">
 <defs><linearGradient id="wa" x1="0" y1="0" x2="0" y2="1"><stop offset="0" stop-color="#056ba6"/><stop offset="1" stop-color="#17456a"/></linearGradient>
 <linearGradient id="wb" x1="0" y1="0" x2="0" y2="1"><stop offset="0" stop-color="#ffffff"/><stop offset="1" stop-color="#e6e6e6"/></linearGradient></defs>
 <path d="M3 1 h20 l18 17 v28 q0 3 -3 3 h-34 q-3 0 -3 -3 v-42 q0 -3 3 -3z" fill="url(#wa)"/>
 <path d="M29 1 h10 q2 0 2 2 v9 q0 1.500 -1.500 .5z" fill="#056ba6"/>
 <path d="M4 4 h18.500 l15.500 14.500 v27.500 h-34z" fill="url(#wb)"/>
 <g fill="#00417a"><rect x="9" y="19" width="8" height="2"/><rect x="9" y="23" width="8" height="2"/><rect x="9" y="27" width="8" height="2"/><rect x="9" y="31" width="24" height="2"/><rect x="9" y="35" width="24" height="2"/><rect x="9" y="39" width="18" height="2"/></g>
 <rect x="19.300" y="19" width="13.400" height="9.400" fill="#6db6e8" stroke="#00417a" stroke-width=".9"/>
 <path d="M20 28 l4 -6 l2.500 3.500 l2 -2 l3.500 4.500z" fill="#3c3c3c"/><circle cx="30.500" cy="20.800" r="1.700" fill="#e8c231"/>
</svg>
<!-- Ubuntu Software (12..54, 165..208) -->
<svg style="left:11px;top:163px" width="44" height="46" viewBox="0 0 44 46">
 <defs><linearGradient id="sa" x1="0" y1="0" x2="0" y2="1"><stop offset="0" stop-color="#ec8d52"/><stop offset=".62" stop-color="#e96b2e"/><stop offset=".66" stop-color="#ea7a41"/><stop offset="1" stop-color="#eb7f47"/></linearGradient></defs>
 <path d="M3 8 h38 l2 4 h-42z" fill="#d7581f"/>
 <path d="M4.500 9 h35 l1.500 3 h-38z" fill="#e66e33"/>
 <rect x="1" y="12" width="42" height="33" fill="url(#sa)"/>
 <path d="M15 16 v-9 q0 -5.200 4 -5.200 h6 q4 0 4 5.200 v9 h-3.200 v-8 q0 -3.200 -2.300 -3.200 h-3 q-2.300 0 -2.300 3.200 v8z" fill="#e5692f"/>
 <path d="M18.500 2.600 h7 M15.600 7 v8.500 M26.300 7 v8.500" stroke="#f39a6c" stroke-width=".9"/>
 <path d="M20 19.500 h4 l7 18 h-4.500 l-4.500 -12.500 l-4.500 12.500 h-4.500z" fill="#fff"/>
 <rect x="12.800" y="29.500" width="18.400" height="4.400" rx="2.200" fill="#fff"/>
 <rect x="13.800" y="30.500" width="11" height="2.400" rx="1.200" fill="#e2500f"/>
</svg>
<!-- Help (center 33,252 r 19.7) -->
<svg style="left:12px;top:231px" width="42" height="42" viewBox="0 0 42 42">
 <defs><linearGradient id="ha" x1="0" y1="0" x2="0" y2="1"><stop offset="0" stop-color="#6299d4"/><stop offset="1" stop-color="#356ca3"/></linearGradient></defs>
 <circle cx="21" cy="21" r="19.700" fill="url(#ha)"/><circle cx="21" cy="21" r="19" fill="none" stroke="#9cc0ea" stroke-width=".8" opacity=".7"/>
 <path d="M14.300 14.500 q.5 -5 6.700 -5 q7 0 7 5.500 q0 3 -3 5.500 q-3 2.500 -3 6 h-2.600 q-.3 -4 2.800 -7 q2.300 -2.200 2.300 -4.300 q0 -3 -3.500 -3 q-3 0 -3.500 2.600 q1.500 1.200 .3 2.500 q-1.500 1.200 -2.800 0 q-1 -1 -.7 -2.800z" fill="#fff"/>
 <circle cx="20.800" cy="32.300" r="2.500" fill="#fff"/>
</svg>
<!-- Chrome (center 33,315 r 22.4) -->
<svg style="left:10px;top:292px" width="46" height="46" viewBox="-23 -23 46 46">
 <circle r="22.400" fill="#fdd03b"/>
 <path d="M0 0 L-19.400 -11.200 A22.400 22.400 0 0 1 19.400 -11.200 Z" fill="#dc4437"/>
 <path d="M0 0 L-19.400 -11.200 A22.400 22.400 0 0 0 0 22.400 Z" fill="#109d58"/>
 <path d="M0 0 L19.400 -11.200 L0 -11.200z" fill="#dc4437"/>
 <path d="M0 22.400 L9.700 5.600 L-9.700 5.600 L-19.400 -11.200 A22.400 22.400 0 0 0 0 22.400z" fill="#109d58"/>
 <path d="M0 -11.200 H19.400 A22.400 22.400 0 0 1 0 22.400 L9.700 5.600z" fill="#fdd03b"/>
 <path d="M0 -11.200 H19.400 L19 -9.500 H4z" fill="#e0a52a" opacity=".55"/>
 <circle r="10.200" fill="#fff"/><circle r="8.400" fill="#4285f4"/>
</svg>
<!-- Terminal (10..56, 362..400) -->
<svg style="left:10px;top:361px" width="47" height="40" viewBox="0 0 47 40">
 <defs><linearGradient id="ta" x1="0" y1="0" x2="0" y2="1"><stop offset="0" stop-color="#f0f0f0"/><stop offset="1" stop-color="#a9a9a9"/></linearGradient>
 <linearGradient id="tb" x1="0" y1="0" x2="0" y2="1"><stop offset="0" stop-color="#5a5a5a"/><stop offset=".5" stop-color="#2e2e2e"/><stop offset="1" stop-color="#1d1d1d"/></linearGradient></defs>
 <rect x=".3" y="1" width="45.600" height="37.800" rx="1.500" fill="url(#ta)"/>
 <rect x="3.700" y="4.800" width="38.400" height="30.100" fill="url(#tb)" stroke="#111" stroke-width=".8"/>
 <path d="M9 11.500 l7 4.300 l-7 4.300" fill="none" stroke="#fff" stroke-width="2.200"/>
 <rect x="17" y="20.700" width="8" height="2.600" fill="#fff"/>
</svg>
<!-- Notepad++ (page 11.7..46.4, 424..465) -->
<svg style="left:8px;top:418px" width="50" height="50" viewBox="8 418 50 50">
 <defs><linearGradient id="na" x1="0" y1="0" x2="0" y2="1"><stop offset="0" stop-color="#ffffff"/><stop offset=".28" stop-color="#e6eaf0"/><stop offset=".42" stop-color="#eef2b0"/><stop offset=".58" stop-color="#d8e84e"/><stop offset=".78" stop-color="#6fc735"/><stop offset="1" stop-color="#1c8f26"/></linearGradient></defs>
 <path d="M11.700 424 H33.500 L42 430.500 L46.400 461.500 L12 465z" fill="url(#na)"/>
 <path d="M33.500 424 L42 430.500 L34.800 430.200z" fill="#cfd3d9"/>
 <path d="M12 426.500 h22 M12 428.700 h23 M12 431 h29 M12 433.300 h29.500 M12 435.600 h30" stroke="#d3d7df" stroke-width=".7"/>
 <path d="M12 424.600 l1 -1 l1 1 l1 -1 l1 1 l1 -1 l1 1 l1 -1 l1 1 l1 -1 l1 1 l1 -1 l1 1 l1 -1 l1 1 l1 -1 l1 1 l1 -1 l1 1 l1 -1 l1 1" stroke="#fff" stroke-width=".6" fill="none"/>
 <ellipse cx="20.800" cy="440.300" rx="5.200" ry="3.900" fill="#6fc24c" stroke="#3c8a25" stroke-width=".6"/>
 <circle cx="24.300" cy="436.300" r="1.700" fill="#fbfdf6" stroke="#4c7a2a" stroke-width=".5"/><circle cx="27" cy="436.200" r="1.500" fill="#fbfdf6" stroke="#4c7a2a" stroke-width=".5"/>
 <circle cx="18.800" cy="446.600" r="2" fill="none" stroke="#3f7d1c" stroke-width=".9"/>
 <path d="M13.300 444.600 L29.500 442.700" stroke="#4f4a1c" stroke-width=".8"/>
 <path d="M23.500 445 v8 M25.500 447 q1.500 -1.500 2 1 t2 0 M30 446 v6 M31.500 448.500 q1.200 -1.500 2 0 t2 0 M36 445 v5 M37.500 447.500 q1 -1 2 0 t2.500 -1.500 M33 450 v4" stroke="#46701c" stroke-width=".8" fill="none"/>
 <path d="M54 421.500 L43 446.500" stroke="#f0a81c" stroke-width="2.300"/><path d="M54.500 420.500 L53.600 422.600" stroke="#c03a2e" stroke-width="2.300"/><path d="M53.600 422.600 L52.800 424.400" stroke="#c9c9c9" stroke-width="2.300"/><path d="M43 446.500 L42.300 448.300" stroke="#e8cfa0" stroke-width="1.500"/>
 <path d="M45 449.500 q5 1 10 1.500" stroke="#4a3a40" stroke-width=".8" fill="none" opacity=".6"/>
</svg>
<!-- apps grid -->
<svg style="left:17px;top:720px" width="32" height="32" viewBox="17 720 32 32"><g fill="#efeeea"><circle cx="21" cy="724" r="3.100"/><circle cx="33" cy="724" r="3.100"/><circle cx="45" cy="724" r="3.100"/><circle cx="21" cy="736" r="3.100"/><circle cx="33" cy="736" r="3.100"/><circle cx="45" cy="736" r="3.100"/><circle cx="21" cy="748" r="3.100"/><circle cx="33" cy="748" r="3.100"/><circle cx="45" cy="748" r="3.100"/></g></svg>

<span class="t" style="left:12.30px;top:6.00px;font-size:14px;font-weight:bold;color:#e8e7e2;letter-spacing:0.582px;text-shadow:0 -1px 0 rgba(0,0,0,.45);">Activities</span>
<span class="t" style="left:123.00px;top:6.00px;font-size:14px;font-weight:bold;color:#e8e7e2;letter-spacing:0.603px;text-shadow:0 -1px 0 rgba(0,0,0,.45);">Notepad++</span>
<span class="t" style="left:685.60px;top:5.00px;font-size:14px;font-weight:bold;color:#e8e7e2;letter-spacing:0.225px;text-shadow:0 -1px 0 rgba(0,0,0,.45);">Sat 01:12</span>
<!-- cursor on top -->
<!-- mouse cursor: tip at (585.1,378.5) -->
<svg style="left:583px;top:376px" width="16" height="24" viewBox="0 0 16 24"><path d="M3 3.800 L3 19.300 L6.300 16.200 L8.900 22 L11.200 21 L8.700 15.300 L12.600 15.300z" fill="#000" opacity=".25"/><path d="M2.100 2.500 L2.100 18.300 L5.600 15 L8.300 21 L10.500 20 L7.900 14.200 L11.800 14.200z" fill="#fff" stroke="#000" stroke-width="1" stroke-linejoin="round"/></svg>

</body>
</html>
